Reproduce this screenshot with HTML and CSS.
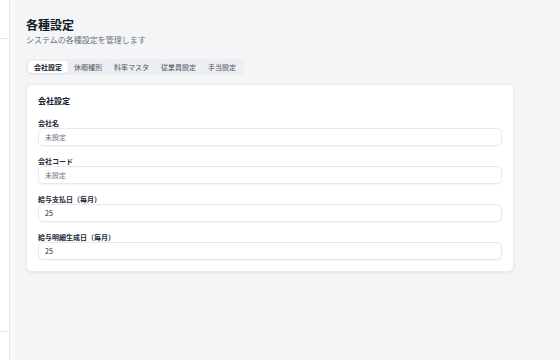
FILE: index.html
```html
<!DOCTYPE html>
<html lang="ja">
<head>
<meta charset="utf-8">
<title>各種設定</title>
<link rel="stylesheet" href="styles.css">
</head>
<body>
<div class="app">
  <aside class="sidebar">
    <div class="sb-top"></div>
    <div class="sb-mid"></div>
    <div class="sb-bottom"></div>
  </aside>
  <main class="main">
    <h1 class="title">各種設定</h1>
    <p class="subtitle">システムの各種設定を管理します</p>
    <nav class="tabs">
      <span class="tab active">会社設定</span>
      <span class="tab">休暇種別</span>
      <span class="tab">料率マスタ</span>
      <span class="tab">従業員設定</span>
      <span class="tab">手当設定</span>
    </nav>
    <section class="card">
      <h2 class="card-title">会社設定</h2>
      <div class="field">
        <label class="label">会社名</label>
        <div class="input placeholder">未設定</div>
      </div>
      <div class="field">
        <label class="label">会社コード</label>
        <div class="input placeholder">未設定</div>
      </div>
      <div class="field">
        <label class="label">給与支払日（毎月）</label>
        <div class="input">25</div>
      </div>
      <div class="field">
        <label class="label">給与明細生成日（毎月）</label>
        <div class="input">25</div>
      </div>
    </section>
  </main>
</div>
</body>
</html>
```
FILE: styles.css
```css
* { box-sizing: border-box; margin: 0; padding: 0; }
html, body { width: 560px; height: 360px; overflow: hidden; }
body {
  font-family: "Noto Sans CJK JP", "Noto Sans", sans-serif;
  color: #111827;
  background: #f4f5f7;
}
.app { display: flex; height: 360px; }
.sidebar {
  width: 10px;
  flex: none;
  background: #ffffff;
  border-right: 1px solid #e6e8eb;
  display: flex;
  flex-direction: column;
}
.sb-top { height: 39px; border-bottom: 1px solid #e5e7eb; }
.sb-mid { flex: 1; }
.sb-bottom { height: 29px; border-top: 1px solid #e5e7eb; }
.main {
  flex: 1;
  border-left: 5px solid #f8f9fa;
  padding: 16px 0 0 11px;
}
.title {
  font-size: 12px;
  line-height: 18px;
  font-weight: 700;
  color: #111827;
}
.subtitle {
  font-size: 8px;
  line-height: 12px;
  color: #6b7280;
}
.tabs {
  margin-top: 13px;
  display: inline-flex;
  background: #eceef1;
  border-radius: 5px;
  padding: 2px;
}
.tab {
  font-size: 7px;
  line-height: 12px;
  padding: 0 6px;
  color: #4b5563;
  border-radius: 4px;
}
.tab.active {
  background: #ffffff;
  color: #111827;
  font-weight: 700;
  box-shadow: 0 1px 2px rgba(0,0,0,0.08);
}
.card {
  margin-top: 9px;
  width: 488px;
  background: #ffffff;
  border: 1px solid #eaecef;
  border-radius: 6px;
  box-shadow: 0 1px 3px rgba(0,0,0,0.07);
  padding: 11px 11px 11px 11px;
}
.card-title {
  font-size: 8px;
  line-height: 10px;
  font-weight: 700;
  color: #111827;
  margin-bottom: 12px;
}
.field { margin-bottom: 10px; }
.field:last-child { margin-bottom: 0; }
.label {
  display: block;
  font-size: 7px;
  line-height: 10px;
  font-weight: 700;
  color: #1f2937;
}
.input {
  height: 18px;
  border: 1px solid #e7e9ec;
  border-radius: 5px;
  box-shadow: 0 1px 1px rgba(0,0,0,0.04);
  font-size: 7px;
  line-height: 16px;
  padding: 0 6px;
  color: #111827;
}
.input.placeholder { color: #6b7280; }
```
